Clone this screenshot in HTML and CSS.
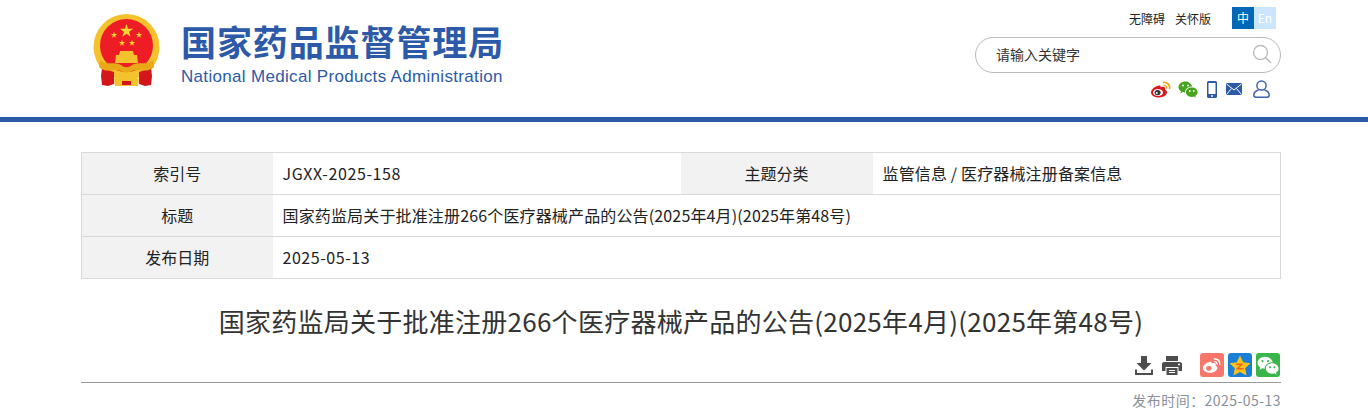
FILE: index.html
```html
<!DOCTYPE html>
<html lang="zh-CN">
<head>
  <meta charset="UTF-8">
  <title>国家药监局关于批准注册266个医疗器械产品的公告</title>
  <link rel="stylesheet" href="styles.css">
</head>
<body>
  <div class="header">
    <div class="header-inner">
      <div class="logo">
        <svg class="emblem" width="68" height="74" viewBox="0 0 68 74">
          <defs>
            <polygon id="star" points="0,-1 .225,-.309 .951,-.309 .363,.118 .588,.809 0,.382 -.588,.809 -.363,.118 -.951,-.309 -.225,-.309" fill="#fbd92f"/>
          </defs>
          <circle cx="33.5" cy="33" r="33" fill="#f3c22d"/>
          <path d="M9 54 L21 58 L21 70 L15 72 L9 71 L8 62Z" fill="#d4161c"/>
          <path d="M58 54 L46 58 L46 70 L52 72 L58 71 L59 62Z" fill="#d4161c"/>
          <circle cx="33.5" cy="31.5" r="26.5" fill="#ee1c25"/>
          <use href="#star" transform="translate(33.5 17) scale(7)"/>
          <use href="#star" transform="translate(21 21) scale(3.3)"/>
          <use href="#star" transform="translate(46 21) scale(3.3)"/>
          <use href="#star" transform="translate(29 29) scale(3.3)"/>
          <use href="#star" transform="translate(39 29) scale(3.3)"/>
          <path d="M27 37 H40 L41 41 H44 L45 49 H22 L23 41 H26Z" fill="#f3c22d"/>
          <path d="M7 46 C13 52 21 47 28 51 C32 54 35 54 39 51 C46 47 54 52 60 46 L61 53 C54 60 46 54 39 57 C35 59 32 59 28 57 C21 54 13 60 6 53Z" fill="#e8a916"/>
          <path d="M21 65 C27 61 40 61 46 65 L45 72 H22Z" fill="#f3c22d"/>
          <path d="M29 67 H38 V71 H29Z" fill="#d4161c"/>
        </svg>
        <div class="logo-text">
          <div class="logo-cn">国家药品监督管理局</div>
          <div class="logo-en">National Medical Products Administration</div>
        </div>
      </div>
      <div class="tools">
        <div class="tools-top">
          <a class="tool-link">无障碍</a>
          <a class="tool-link">关怀版</a>
          <div class="lang">
            <span class="lang-cn">中</span><span class="lang-en">En</span>
          </div>
        </div>
        <div class="search">
          <span class="search-text">请输入关键字</span>
          <svg width="20" height="20" viewBox="0 0 20 20" fill="none" stroke="#bdbdbd">
            <circle cx="8.5" cy="8.5" r="7" stroke-width="1.4"/>
            <path d="M13.5 13.5 L19 19" stroke-width="1.6"/>
          </svg>
        </div>
        <div class="tools-icons">
          <svg class="icon-weibo" width="22" height="18" viewBox="0 0 22 18">
            <path d="M9 5.5 C4 6.5 1 10 1 12.5 C1 15.5 5 17.5 9 17.5 C14 17.5 17 14.5 17 12 C17 10.5 15.5 10 15 9.7 C15.6 8 15 6.5 12.5 6.7 C11.5 6.8 10.8 7.3 10.5 7.2 C10.8 5.8 10.3 5.2 9 5.5Z" fill="#e0141a"/>
            <ellipse cx="8" cy="12.5" rx="5" ry="3.6" fill="#fff"/>
            <ellipse cx="7.6" cy="12.6" rx="3" ry="2.6" fill="#333"/>
            <circle cx="6.8" cy="13" r="1" fill="#fff"/>
            <path d="M13 2.5 C17 1.5 20.5 5 19.5 9" fill="none" stroke="#f2a91e" stroke-width="1.7"/>
            <path d="M13.5 5.5 C15.5 5 17 6.5 16.5 8.5" fill="none" stroke="#f2a91e" stroke-width="1.4"/>
          </svg>
          <svg width="20" height="17" viewBox="0 0 20 17">
            <path d="M7.5 0.5 C3.5 0.5 0.5 3 0.5 6 C0.5 7.8 1.5 9.2 3 10.3 L2.3 12.5 L4.8 11.1 C5.5 11.3 6.2 11.4 7 11.4 C7 8 10 5.5 14.3 5.5 C13.4 2.6 10.7 0.5 7.5 0.5Z" fill="#46a51f"/>
            <path d="M13.8 6.5 C10.5 6.5 8 8.6 8 11.2 C8 13.8 10.5 15.9 13.8 15.9 C14.5 15.9 15.1 15.8 15.7 15.6 L17.8 16.8 L17.2 15 C18.6 14.1 19.6 12.8 19.6 11.2 C19.6 8.6 17.1 6.5 13.8 6.5Z" fill="#46a51f"/>
            <circle cx="5" cy="4.5" r="1" fill="#fff"/><circle cx="10" cy="4.5" r="1" fill="#fff"/>
            <circle cx="11.8" cy="10" r="0.9" fill="#fff"/><circle cx="15.8" cy="10" r="0.9" fill="#fff"/>
          </svg>
          <svg width="10" height="17" viewBox="0 0 10 17">
            <rect x="0" y="0" width="10" height="17" rx="1.5" fill="#2c5aa8"/>
            <rect x="1.5" y="2" width="7" height="11" fill="#fff"/>
            <circle cx="5" cy="15" r="1" fill="#fff"/>
          </svg>
          <svg width="16" height="12" viewBox="0 0 16 12">
            <rect width="16" height="12" rx="1" fill="#2c5aa8"/>
            <path d="M0.5 1 L8 7 L15.5 1 M0.5 11.5 L5.5 5.5 M15.5 11.5 L10.5 5.5" fill="none" stroke="#fff" stroke-width="1"/>
          </svg>
          <svg class="icon-user" width="17" height="18" viewBox="0 0 17 18" fill="none" stroke="#3e62ae" stroke-width="1.5">
            <circle cx="8.5" cy="5.5" r="4.6"/>
            <path d="M5.5 10 C2.5 11 0.8 13 0.8 15 C0.8 16.5 1.5 17.2 3 17.2 H14 C15.5 17.2 16.2 16.5 16.2 15 C16.2 13 14.5 11 11.5 10"/>
          </svg>
        </div>
      </div>
    </div>
  </div>

  <div class="main">
    <table class="info-table">
      <tr>
        <th class="first-col">索引号</th>
        <td class="code-cell">JGXX-2025-158</td>
        <th>主题分类</th>
        <td>监管信息 / 医疗器械注册备案信息</td>
      </tr>
      <tr>
        <th>标题</th>
        <td colspan="3">国家药监局关于批准注册266个医疗器械产品的公告(2025年4月)(2025年第48号)</td>
      </tr>
      <tr>
        <th>发布日期</th>
        <td colspan="3" class="date-cell">2025-05-13</td>
      </tr>
    </table>

    <h1 class="title">国家药监局关于批准注册266个医疗器械产品的公告(2025年4月)(2025年第48号)</h1>

    <div class="share-row">
      <svg class="share-plain" width="18" height="19" viewBox="0 0 18 19" fill="#4d4d4d">
        <path d="M6 0 H12 V7 H16.5 L9 14.5 L1.5 7 H6Z"/>
        <path d="M0 13.5 H2 V17 H16 V13.5 H18 V19 H0Z"/>
      </svg>
      <svg class="share-print" width="20" height="19" viewBox="0 0 20 19" fill="#4d4d4d">
        <path d="M4 0 H16 V5 H4Z"/>
        <path d="M2 6 H18 C19 6 20 7 20 8 V15 H16.5 V11 H3.5 V15 H0 V8 C0 7 1 6 2 6Z"/>
        <path d="M4.5 12 H15.5 V19 H4.5Z"/>
        <path d="M7 14.5 H13 M7 16.5 H13" stroke="#fff" stroke-width="1"/>
        <circle cx="17" cy="8.5" r="1" fill="#fff"/>
      </svg>
      <span class="share-btn share-weibo">
        <svg width="20" height="18" viewBox="0 0 22 18">
          <path d="M9 5.5 C4 6.5 1 10 1 12.5 C1 15.5 5 17.5 9 17.5 C14 17.5 17 14.5 17 12 C17 10.5 15.5 10 15 9.7 C15.6 8 15 6.5 12.5 6.7 C11.5 6.8 10.8 7.3 10.5 7.2 C10.8 5.8 10.3 5.2 9 5.5Z" fill="#fff"/>
          <ellipse cx="7.6" cy="12.6" rx="3" ry="2.6" fill="#f8766a"/>
          <path d="M13 2.5 C17 1.5 20.5 5 19.5 9" fill="none" stroke="#fff" stroke-width="1.7"/>
          <path d="M13.5 5.5 C15.5 5 17 6.5 16.5 8.5" fill="none" stroke="#fff" stroke-width="1.4"/>
        </svg>
      </span>
      <span class="share-btn share-qzone">
        <svg width="22" height="21" viewBox="0 0 22 21">
          <polygon points="11,0.5 14.2,7.2 21.5,8.2 16.2,13.3 17.5,20.5 11,17 4.5,20.5 5.8,13.3 0.5,8.2 7.8,7.2" fill="#fcc419"/>
          <path d="M7.5 8.5 H14.5 L10 13 H15 L14 14.5 H6.5 L11 10 H7Z" fill="#e8641c"/>
        </svg>
      </span>
      <span class="share-btn share-wechat">
        <svg width="22" height="19" viewBox="0 0 20 17">
          <path d="M7.5 0.5 C3.5 0.5 0.5 3 0.5 6 C0.5 7.8 1.5 9.2 3 10.3 L2.3 12.5 L4.8 11.1 C5.5 11.3 6.2 11.4 7 11.4 C7 8 10 5.5 14.3 5.5 C13.4 2.6 10.7 0.5 7.5 0.5Z" fill="#fff"/>
          <path d="M13.8 6.5 C10.5 6.5 8 8.6 8 11.2 C8 13.8 10.5 15.9 13.8 15.9 C14.5 15.9 15.1 15.8 15.7 15.6 L17.8 16.8 L17.2 15 C18.6 14.1 19.6 12.8 19.6 11.2 C19.6 8.6 17.1 6.5 13.8 6.5Z" fill="#fff"/>
          <circle cx="5" cy="4.5" r="1" fill="#39b54a"/><circle cx="10" cy="4.5" r="1" fill="#39b54a"/>
          <circle cx="11.8" cy="10" r="0.9" fill="#39b54a"/><circle cx="15.8" cy="10" r="0.9" fill="#39b54a"/>
        </svg>
      </span>
    </div>

    <div class="pub-date">发布时间：2025-05-13</div>
  </div>
</body>
</html>
```

FILE: styles.css
```css
html, body {
  height: 418px;
  overflow: hidden;
}

body {
  margin: 0;
  font-family: "Noto Sans CJK SC", "Noto Sans", sans-serif;
  color: #333;
  background-color: #fff;
}

.header {
  height: 117px;
  border-bottom: 5px solid #2c5aa8;
}

.header-inner {
  width: 1200px;
  margin-left: 81px;
  display: flex;
  justify-content: space-between;
}

.logo {
  display: flex;
  padding: 14px 0 0 12px;
}

.emblem {
  display: block;
}

.logo-text {
  margin-left: 20px;
  margin-top: 4px;
  color: #2c5aa8;
}

.logo-cn {
  font-size: 35px;
  line-height: 46px;
  font-weight: 700;
  letter-spacing: 0.9px;
  white-space: nowrap;
}

.logo-en {
  font-family: "Liberation Sans", sans-serif;
  font-size: 17px;
  line-height: 20px;
  letter-spacing: 0.32px;
  margin-top: 3px;
  white-space: nowrap;
}

.tools {
  width: 306px;
  display: flex;
  flex-direction: column;
  align-items: flex-end;
}

.tools-top {
  display: flex;
  align-items: center;
  height: 22px;
  margin-top: 7px;
  padding-right: 5px;
  font-size: 12px;
}

.tool-link {
  color: #222;
  margin-right: 10px;
}

.lang {
  display: flex;
  margin-left: 11px;
  font-size: 12px;
  line-height: 22px;
  text-align: center;
}

.lang-cn {
  width: 22px;
  background-color: #0068b7;
  color: #fff;
}

.lang-en {
  width: 22px;
  background-color: #cce6ff;
  color: #fff;
}

.search {
  box-sizing: border-box;
  width: 306px;
  height: 36px;
  margin-top: 8px;
  padding: 0 8px 2px 20px;
  border: 1px solid #bbb;
  border-radius: 18px;
  display: flex;
  align-items: center;
  justify-content: space-between;
}

.search-text {
  font-size: 14px;
  color: #333;
}

.tools-icons {
  display: flex;
  align-items: center;
  gap: 9px;
  margin-top: 7px;
  padding-right: 11px;
}

.icon-weibo {
  margin-right: -3px;
}

.icon-user {
  margin-left: 2px;
}

.main {
  width: 1200px;
  margin: 30px 0 0 81px;
}

.info-table {
  width: 1200px;
  table-layout: fixed;
  border-collapse: collapse;
  font-size: 16px;
}

.info-table th,
.info-table td {
  box-sizing: border-box;
  height: 42px;
  padding: 0 0 2px;
  border-top: 1px solid #d9d9d9;
  border-bottom: 1px solid #d9d9d9;
  font-weight: 400;
  color: #222;
}

.info-table th {
  width: 192px;
  background-color: #f2f2f2;
  text-align: center;
}

.info-table .first-col {
  width: 191px;
}

.info-table th:first-child {
  border-left: 1px solid #d9d9d9;
}

.info-table td {
  padding-left: 10px;
  letter-spacing: 0.15px;
}

.info-table td:last-child {
  border-right: 1px solid #d9d9d9;
}

.info-table .code-cell {
  letter-spacing: 0.6px;
}

.info-table .date-cell {
  letter-spacing: 0.55px;
}

.title {
  margin: 23px 0 0;
  font-size: 26px;
  line-height: 38px;
  font-weight: 400;
  letter-spacing: 0.26px;
  text-align: center;
  color: #333;
}

.share-row {
  display: flex;
  align-items: center;
  justify-content: flex-end;
  height: 28px;
  margin-top: 11px;
  padding: 0 1px 3px 0;
  border-bottom: 1px solid #999;
}

.share-plain {
  margin-right: 9px;
}

.share-print {
  margin-right: 18px;
}

.share-btn {
  width: 24px;
  height: 24px;
  margin-left: 4px;
  border-radius: 3px;
  display: flex;
  align-items: center;
  justify-content: center;
}

.share-print + .share-btn {
  margin-left: 0;
}

.share-weibo {
  background-color: #f8766a;
}

.share-qzone {
  background-color: #1a7fd8;
}

.share-wechat {
  background-color: #39b54a;
}

.pub-date {
  margin-top: 7px;
  text-align: right;
  font-family: "Noto Sans CJK TC", "Noto Sans", sans-serif;
  font-size: 14px;
  line-height: 20px;
  letter-spacing: 0.45px;
  color: #8a8f9c;
}
```
